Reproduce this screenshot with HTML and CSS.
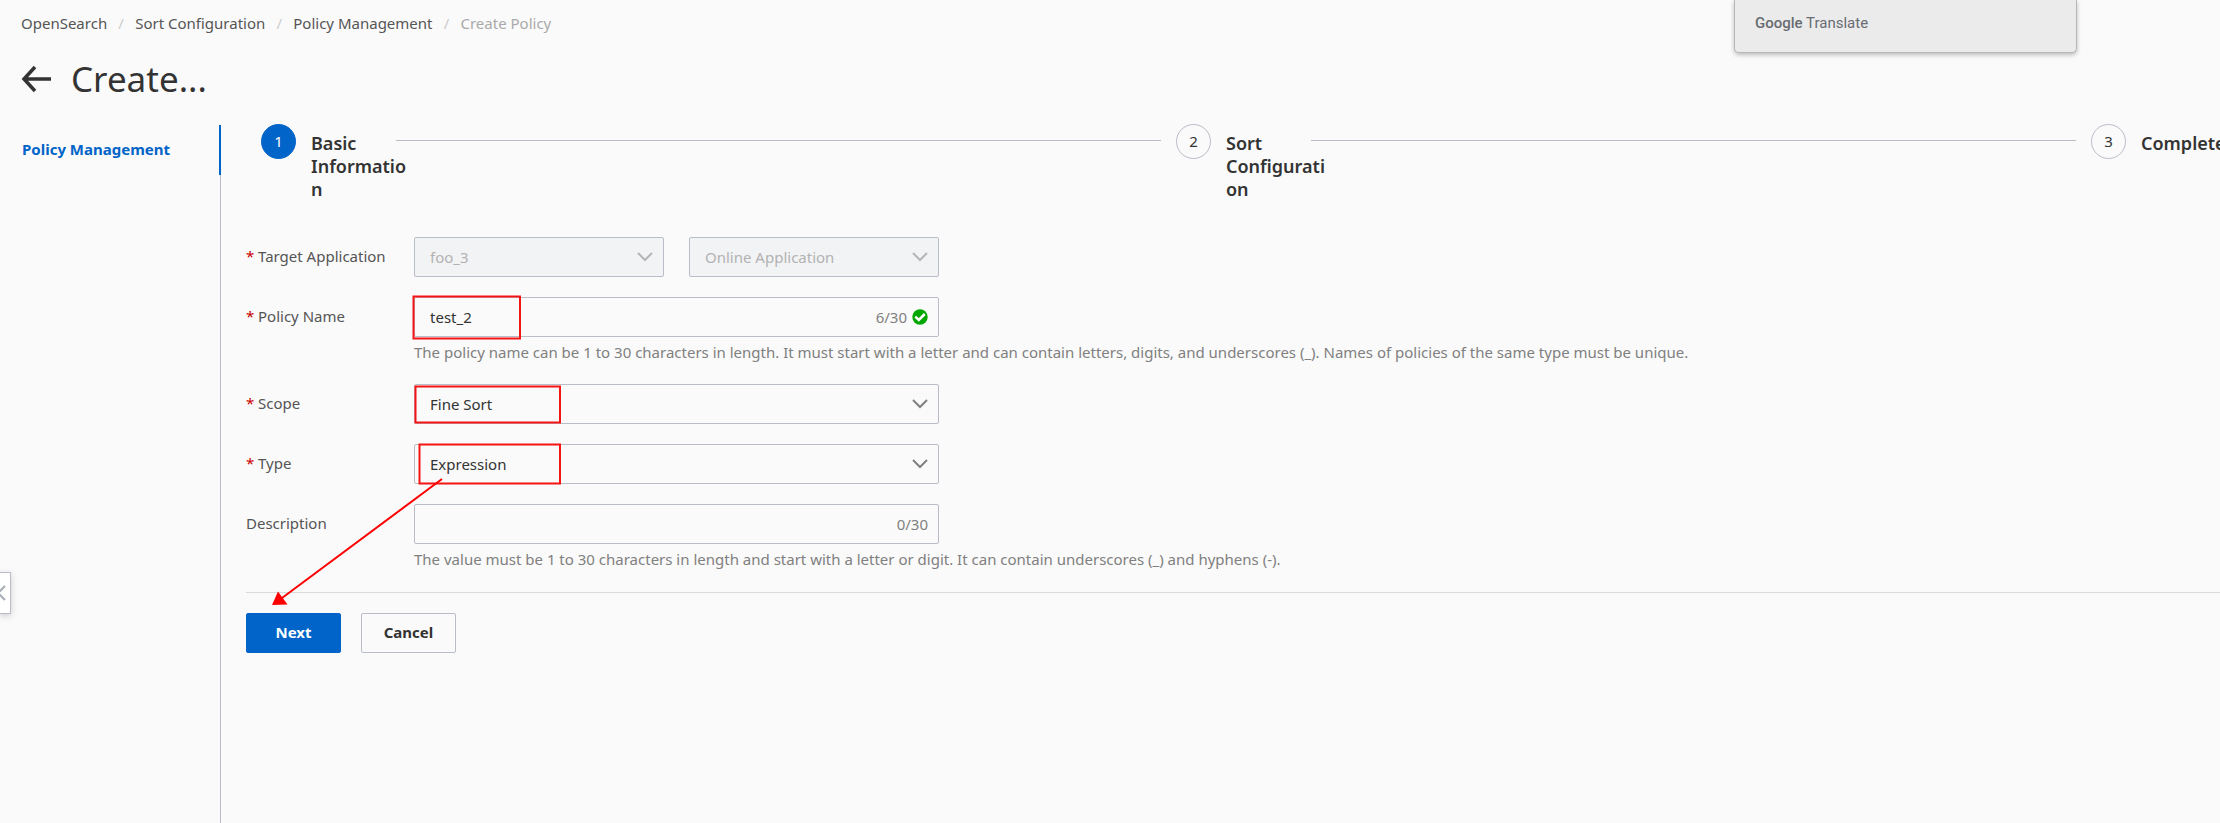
FILE: index.html
```html
<!DOCTYPE html>
<html lang="en">
<head>
<meta charset="utf-8">
<title>Create Policy</title>
<link rel="stylesheet" href="styles.css">
</head>
<body>
<div class="page">
  <header class="header">
    <nav class="breadcrumb" aria-label="Breadcrumb">
      <a href="#">OpenSearch</a><span class="slash">/</span>
      <a href="#">Sort Configuration</a><span class="slash">/</span>
      <a href="#">Policy Management</a><span class="slash">/</span>
      <span class="current">Create Policy</span>
    </nav>
    <div class="title-row">
      <button class="back" type="button" aria-label="Back">
        <svg width="30" height="28" viewBox="0 0 30 28" fill="none" stroke="#333" stroke-width="3.500"><path d="M2.500 14H30M14 2L3 14l11 12"/></svg>
      </button>
      <h1>Create...</h1>
    </div>
  </header>

  <div class="columns">
    <aside class="side"><a class="side-link" href="#">Policy Management</a></aside>
    <main class="main">
      <ol class="steps">
        <li class="step active"><span class="num">1</span><span class="step-title">Basic Information</span><span class="line"></span></li>
        <li class="step"><span class="num">2</span><span class="step-title">Sort Configuration</span><span class="line"></span></li>
        <li class="step last"><span class="num">3</span><span class="step-title">Completed</span></li>
      </ol>

      <form class="form">
        <div class="row">
          <label class="label required" for="app">Target Application</label>
          <div class="fields pair">
            <div class="control disabled">
              <select id="app" disabled><option>foo_3</option></select>
              <svg class="chevron" width="16" height="10" viewBox="0 0 16 10"><path d="M1 1l7 7 7-7"/></svg>
            </div>
            <div class="control disabled">
              <select aria-label="Application type" disabled><option>Online Application</option></select>
              <svg class="chevron" width="16" height="10" viewBox="0 0 16 10"><path d="M1 1l7 7 7-7"/></svg>
            </div>
          </div>
        </div>
        <div class="row">
          <label class="label required" for="name">Policy Name</label>
          <div class="fields">
            <div class="control">
              <input id="name" type="text" value="test_2" maxlength="30">
              <span class="count">6/30</span>
              <svg class="ok" width="16" height="16" viewBox="0 0 16 16"><circle cx="8" cy="8" r="7.700" fill="#00a700"/><path d="M3.300 7.600l3.500 3.400 6-6" fill="none" stroke="#fff" stroke-width="2.600"/></svg>
            </div>
            <p class="help">The policy name can be 1 to 30 characters in length. It must start with a letter and can contain letters, digits, and underscores (_). Names of policies of the same type must be unique.</p>
          </div>
        </div>
        <div class="row">
          <label class="label required" for="scope">Scope</label>
          <div class="fields">
            <div class="control">
              <select id="scope"><option>Fine Sort</option></select>
              <svg class="chevron" width="16" height="10" viewBox="0 0 16 10"><path d="M1 1l7 7 7-7"/></svg>
            </div>
          </div>
        </div>
        <div class="row">
          <label class="label required" for="type">Type</label>
          <div class="fields">
            <div class="control">
              <select id="type"><option>Expression</option></select>
              <svg class="chevron" width="16" height="10" viewBox="0 0 16 10"><path d="M1 1l7 7 7-7"/></svg>
            </div>
          </div>
        </div>
        <div class="row">
          <label class="label" for="desc">Description</label>
          <div class="fields">
            <div class="control">
              <input id="desc" type="text" maxlength="30">
              <span class="count">0/30</span>
            </div>
            <p class="help">The value must be 1 to 30 characters in length and start with a letter or digit. It can contain underscores (_) and hyphens (-).</p>
          </div>
        </div>
        <div class="actions">
          <button class="btn primary" type="button">Next</button>
          <button class="btn" type="button">Cancel</button>
        </div>
      </form>
    </main>
  </div>

  <div class="translate"><b>Google</b> Translate</div>
  <button class="collapse" type="button" aria-label="Collapse sidebar">
    <svg width="6" height="16" viewBox="0 0 6 16" fill="none" stroke="#a6adb4" stroke-width="2"><path d="M5 1L-2 8l7 7"/></svg>
  </button>
  <svg class="marks" width="600" height="640" viewBox="0 0 600 640" fill="none" stroke="#f41414" stroke-width="2" aria-hidden="true">
    <rect x="413.500" y="296.500" width="106.500" height="42"/>
    <rect x="415.500" y="386.500" width="144.500" height="36"/>
    <rect x="419.500" y="444.500" width="140.500" height="39"/>
    <path d="M442 479L282 598" stroke="#f00"/>
    <path d="M272 605l6-13.500 9.500 13z" fill="#f00" stroke="none"/>
  </svg>
</div>
</body>
</html>
```
FILE: styles.css
```css
* { box-sizing: border-box; }
body {
  margin: 0;
  background: #fafafa;
  color: #333;
  font-family: "Noto Sans", "Open Sans", sans-serif;
  font-size: 15px;
  line-height: 20px;
}
a { color: inherit; text-decoration: none; }
.page {
  position: relative;
  min-height: 100vh;
  display: flex;
  flex-direction: column;
  overflow: hidden;
}
.header { padding: 13px 21px 0; }
.breadcrumb { display: flex; color: #555; }
.slash { width: 28px; text-align: center; color: #ccc; }
.current { color: #aaa; }
.title-row {
  display: flex;
  align-items: center;
  gap: 20px;
  height: 50px;
  margin: 21px 0;
}
.back { display: flex; padding: 0; border: 0; background: none; }
h1 { margin: 0; font-size: 35px; line-height: 50px; font-weight: 400; }

.columns { flex: 1; display: flex; }
.side { flex: 0 0 221px; border-right: 1px solid #b9bdc8; }
.side-link {
  display: block;
  margin-right: -1px;
  padding: 14px 0 16px 22px;
  border-right: 2px solid #0064c8;
  color: #0064c8;
  font-weight: 700;
}
.main { flex: 1; min-width: 0; padding-left: 25px; }

.steps { display: flex; margin: 0; padding: 0 0 0 15px; list-style: none; height: 112px; }
.step { flex: 1 1 0; display: flex; min-width: 0; }
.step.last { flex: 0 0 129px; }
.num {
  flex: none;
  width: 35px;
  height: 35px;
  margin: -1px 15px 0 0;
  border: 1px solid #b9bdc8;
  border-radius: 50%;
  text-align: center;
  line-height: 32px;
}
.active .num { background: #0064c8; border-color: #0064c8; color: #fff; }
.step-title {
  flex: 0 0 102px;
  padding-top: 7px;
  font-size: 18px;
  line-height: 23px;
  font-weight: 600;
  overflow-wrap: anywhere;
}
.last .step-title { overflow-wrap: normal; }
.line { flex: 1; height: 1px; margin: 15px 15px 0 -17px; background: #b9bdc8; }

.form { display: flex; flex-direction: column; gap: 20px; }
.row { display: flex; }
.label { flex: 0 0 168px; line-height: 38px; color: #555; }
.required::before { content: "*"; display: inline-block; width: 12px; color: #c80000; }
.fields { flex: 1; min-width: 0; }
.pair { display: flex; gap: 25px; }
.control {
  position: relative;
  display: flex;
  align-items: center;
  width: 525px;
  height: 40px;
  border: 1px solid #b9bdc8;
  border-radius: 2px;
}
.pair .control { width: 250px; }
.disabled { background: #f2f3f5; }
.control select, .control input {
  flex: 1;
  min-width: 0;
  height: 38px;
  margin: 0;
  padding: 0 15px 1px;
  border: 0;
  outline: 0;
  background: transparent;
  appearance: none;
  color: #333;
  font: inherit;
}
.control select:disabled { color: #b2b2b2; opacity: 1; }
.chevron {
  position: absolute;
  right: 10px;
  top: 14px;
  fill: none;
  stroke: #808080;
  stroke-width: 2;
  pointer-events: none;
}
.disabled .chevron { stroke: #b5b5b5; }
.count { margin-right: 10px; color: #808080; }
.ok { margin: 0 10px 0 -5px; }
.help { margin: 0; padding: 5px 0 2px; color: #808080; white-space: nowrap; }

.actions { display: flex; gap: 20px; margin-top: 1px; padding-top: 20px; border-top: 1px solid #dadada; }
.btn {
  width: 95px;
  height: 40px;
  padding: 0 0 2px;
  border: 1px solid #b9bdc8;
  border-radius: 2px;
  background: #fafafa;
  color: #333;
  font: inherit;
  font-weight: 700;
}
.primary { background: #0064c8; border-color: #0064c8; color: #fff; }

.translate {
  position: absolute;
  top: 0;
  right: 143px;
  width: 343px;
  height: 53px;
  padding: 13px 20px;
  border: 1px solid #b4b8b8;
  border-top: 0;
  border-radius: 0 0 5px 5px;
  background: #ebebeb;
  box-shadow: 0 2px 4px #bbb;
  color: #676c72;
  font-family: Roboto, sans-serif;
  font-size: 15px;
}
.translate b { font-weight: 500; }
.collapse {
  position: absolute;
  left: 0;
  top: 572px;
  width: 11px;
  height: 42px;
  padding: 0;
  border: 1px solid #b9bdc8;
  border-left: 0;
  background: #fff;
  box-shadow: 0 2px 6px #ccc;
  display: flex;
  align-items: center;
}
.marks { position: absolute; left: 0; top: 0; pointer-events: none; }
```
